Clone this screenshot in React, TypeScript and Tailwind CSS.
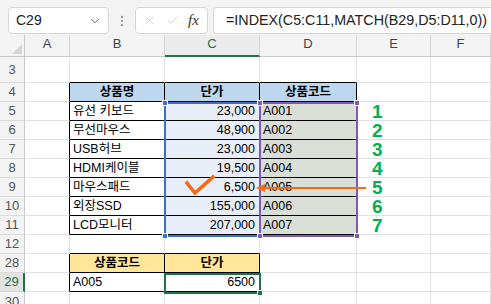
import { ChevronDown, X, Check, EllipsisVertical } from 'lucide-react';

type Cell = { t?: string; align?: 'l' | 'r' | 'c'; bold?: boolean; bg?: string; num?: boolean };

const ROWS = ['3', '4', '5', '6', '7', '8', '9', '10', '11', '12', '28', '29', '30'];
const COLS = ['A', 'B', 'C', 'D', 'E', 'F'];

const items: [string, string, string][] = [
  ['유선 키보드', '23,000', 'A001'],
  ['무선마우스', '48,900', 'A002'],
  ['USB허브', '23,000', 'A003'],
  ['HDMI케이블', '19,500', 'A004'],
  ['마우스패드', '6,500', 'A005'],
  ['외장SSD', '155,000', 'A006'],
  ['LCD모니터', '207,000', 'A007'],
];

function getCell(r: string, c: string): Cell {
  const n = Number(r);
  if (n === 4) {
    if (c === 'B') return { t: '상품명', align: 'c', bold: true, bg: 'bg-[#bdd7ee]' };
    if (c === 'C') return { t: '단가', align: 'c', bold: true, bg: 'bg-[#bdd7ee]' };
    if (c === 'D') return { t: '상품코드', align: 'c', bold: true, bg: 'bg-[#bdd7ee]' };
  }
  if (n >= 5 && n <= 11) {
    const it = items[n - 5];
    if (c === 'B') return { t: it[0], align: 'l' };
    if (c === 'C') return { t: it[1], align: 'r', bg: 'bg-[#e8eef7]' };
    if (c === 'D') return { t: it[2], align: 'l', bg: 'bg-[#d9ded6]' };
    if (c === 'E') return { t: String(n - 4), num: true };
  }
  if (n === 28) {
    if (c === 'B') return { t: '상품코드', align: 'c', bold: true, bg: 'bg-[#ffe699]' };
    if (c === 'C') return { t: '단가', align: 'c', bold: true, bg: 'bg-[#ffe699]' };
  }
  if (n === 29) {
    if (c === 'B') return { t: 'A005', align: 'l' };
    if (c === 'C') return { t: '6500', align: 'r' };
  }
  return {};
}

function rightBlack(r: string, c: string) {
  const n = Number(r);
  if (n >= 4 && n <= 11 && ['A', 'B', 'C', 'D'].includes(c)) return true;
  if ((n === 28 || n === 29) && ['A', 'B', 'C'].includes(c)) return true;
  return false;
}

function bottomBlack(r: string, c: string) {
  const n = Number(r);
  if (n >= 3 && n <= 11 && ['B', 'C', 'D'].includes(c)) return true;
  if ((n === 12 || n === 28 || n === 29) && ['B', 'C'].includes(c)) return true;
  return false;
}

function Handle({ className }: { className: string }) {
  return <div className={`absolute w-[6px] h-[6px] border border-white ${className}`} />;
}

export default function App() {
  return (
    <div
      className="w-[491px] h-[304px] overflow-hidden bg-white text-black"
      style={{ fontFamily: '"Liberation Sans", "Noto Sans CJK KR", sans-serif' }}
    >
      {/* formula bar */}
      <div className="h-[35px] bg-[#f3f3f3] flex items-start pt-[7px] pl-[8px] gap-[5px]">
        <div className="w-[101px] h-[27px] bg-white border border-[#d6d6d6] rounded-[4px] flex items-center justify-between pl-[7px] pr-[6px]">
          <span className="text-[14px] text-[#222]">C29</span>
          <ChevronDown className="w-[14px] h-[14px] text-[#555]" strokeWidth={1.6} />
        </div>
        <div className="w-[16px] h-[27px] flex items-center justify-center">
          <EllipsisVertical className="w-[14px] h-[14px] text-[#9a9a9a]" strokeWidth={2} />
        </div>
        <div className="w-[73px] h-[27px] bg-white border border-[#d6d6d6] rounded-[4px] flex items-center pl-[7px] gap-[10px]">
          <X className="w-[13px] h-[13px] text-[#c4c4c4]" strokeWidth={1.4} />
          <Check className="w-[13px] h-[13px] text-[#c4c4c4]" strokeWidth={1.4} />
          <span
            className="text-[15px] italic text-[#333] -ml-[1px]"
            style={{ fontFamily: '"Liberation Serif", serif' }}
          >
            fx
          </span>
        </div>
        <div className="flex-1 h-[27px] bg-white border border-r-0 border-[#d6d6d6] rounded-l-[4px] flex items-center pl-[12px]">
          <span className="text-[14.3px] text-[#222] whitespace-nowrap">=INDEX(C5:C11,MATCH(B29,D5:D11,0))</span>
        </div>
      </div>

      {/* sheet */}
      <div className="relative">
        <div className="grid grid-cols-[25px_45px_95px_95px_97px_74px_1fr] grid-rows-[22px_26px_repeat(11,19px)]">
          {/* corner */}
          <div className="bg-[#f3f3f3] border-r border-b border-[#c8c8c8] flex items-end justify-end p-[2px]">
            <div className="w-0 h-0 border-l-[10px] border-l-transparent border-b-[10px] border-b-[#d4d4d4]" />
          </div>
          {COLS.map((c) => (
            <div
              key={c}
              className={
                c === 'C'
                  ? 'bg-[#ebebeb] border-r border-[#d4d4d4] border-b-2 border-b-[#217346] flex items-end justify-center pb-[2px] text-[13px] text-[#217346]'
                  : 'bg-[#f3f3f3] border-r border-b border-r-[#d4d4d4] border-b-[#c8c8c8] flex items-end justify-center pb-[3px] text-[13px] text-[#444]'
              }
            >
              {c}
            </div>
          ))}

          {ROWS.map((r) => (
            <div key={r} className="contents">
              <div
                className={
                  r === '29'
                    ? 'bg-[#e2e2e2] border-r-2 border-r-[#217346] border-b border-b-[#d4d4d4] flex items-center justify-center text-[13px] text-[#217346]'
                    : 'bg-[#f3f3f3] border-r border-b border-r-[#c8c8c8] border-b-[#dadada] flex items-center justify-center text-[13px] text-[#555]'
                }
              >
                {r}
              </div>
              {COLS.map((c) => {
                const cell = getCell(r, c);
                const rb = rightBlack(r, c) ? 'border-r-black' : 'border-r-[#e1e1e1]';
                const bb = bottomBlack(r, c) ? 'border-b-black' : 'border-b-[#e1e1e1]';
                const align =
                  cell.align === 'r' ? 'justify-end pr-[4px]' : cell.align === 'c' ? 'justify-center' : 'justify-start pl-[3px]';
                return (
                  <div
                    key={c}
                    className={`border-r border-b ${rb} ${bb} ${cell.bg ?? 'bg-white'} flex items-center ${align} overflow-visible whitespace-nowrap`}
                  >
                    {cell.num ? (
                      <span className="pl-[12px] text-[19px] leading-none font-bold text-[#00b050]">{cell.t}</span>
                    ) : cell.t ? (
                      <span className={`text-[12.5px] leading-none ${cell.bold ? 'font-bold' : ''}`}>{cell.t}</span>
                    ) : null}
                  </div>
                );
              })}
            </div>
          ))}
        </div>

        {/* range references */}
        <div className="absolute left-[164px] top-[67px] w-[97px] h-[135px] border-2 border-[#3f6fcb]" />
        <div className="absolute left-[259px] top-[67px] w-[99px] h-[135px] border-2 border-[#7e5ab8]" />
        <Handle className="left-[162px] top-[65px] bg-[#3f6fcb]" />
        <Handle className="left-[162px] top-[198px] bg-[#3f6fcb]" />
        <Handle className="left-[257px] top-[65px] bg-[#7e5ab8]" />
        <Handle className="left-[354px] top-[65px] bg-[#7e5ab8]" />
        <Handle className="left-[257px] top-[198px] bg-[#7e5ab8]" />
        <Handle className="left-[354px] top-[198px] bg-[#7e5ab8]" />

        {/* selected cell C29 */}
        <div className="absolute left-[164px] top-[238px] w-[97px] h-[21px] border-2 border-[#217346]" />
        <div className="absolute left-[257px] top-[255px] w-[6px] h-[6px] bg-[#217346] border border-white" />

        {/* annotations */}
        <svg className="absolute left-0 top-0 pointer-events-none" width="491" height="269" viewBox="0 0 491 269">
          <polyline
            points="187,148 195,158 213,142"
            fill="none"
            stroke="#f66a12"
            strokeWidth="3.5"
            strokeLinecap="square"
            strokeLinejoin="miter"
          />
          <line x1="263" y1="153" x2="366" y2="153" stroke="#f66a12" strokeWidth="2" />
          <polygon points="256,153 265,149 265,157" fill="#f66a12" />
        </svg>
      </div>
    </div>
  );
}
